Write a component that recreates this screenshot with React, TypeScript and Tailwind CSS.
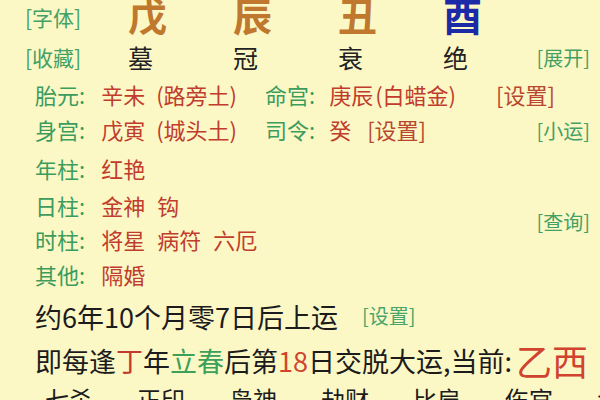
import React from 'react';

const green = 'text-[#3b9c5d]';
const red = 'text-[#c03c2d]';

const Label: React.FC<{ children: React.ReactNode }> = ({ children }) => (
  <span className={green}>{children}</span>
);

const Value: React.FC<{ children: React.ReactNode; className?: string }> = ({ children, className = '' }) => (
  <span className={`${red} ${className}`}>{children}</span>
);

const SideLink: React.FC<{ children: React.ReactNode; className?: string }> = ({ children, className = '' }) => (
  <span className={`text-[20px] leading-none text-[#45a065] ${className}`}>{children}</span>
);

const pillars = [
  { gan: '戊', state: '墓', color: 'text-[#c0782e]' },
  { gan: '辰', state: '冠', color: 'text-[#c0782e]' },
  { gan: '丑', state: '衰', color: 'text-[#c0782e]' },
  { gan: '酉', state: '绝', color: 'text-[#1c2aa8]' }
];

const gods = ['七杀', '正印', '枭神', '劫财', '比肩', '伤官', '食神'];

export default function App() {
  return (
    <div className="w-[600px] h-[400px] overflow-hidden bg-[#fcf8c6] font-['Noto_Sans_CJK_SC',sans-serif] leading-none">
      <div className="-mt-[7px]">
        {/* 四柱 */}
        <div className="flex h-[42px] items-center">
          <div className="w-[128px] pl-[25px] mt-[6px]">
            <SideLink className="text-[21px]">[字体]</SideLink>
          </div>
          {pillars.map((p, i) => (
            <div key={i} className={`w-[105px] text-[39px] font-bold ${p.color}`}>
              {p.gan}
            </div>
          ))}
        </div>

        <div className="flex h-[45px] items-center">
          <div className="w-[128px] pl-[25px]">
            <SideLink className="text-[21px]">[收藏]</SideLink>
          </div>
          {pillars.map((p, i) => (
            <div key={i} className={`${i === 3 ? 'w-[82px]' : 'w-[105px]'} text-[25px] text-[#222]`}>
              {p.state}
            </div>
          ))}
          <div className="flex-1 flex justify-end pr-[10px]">
            <SideLink>[展开]</SideLink>
          </div>
        </div>

        {/* 胎元 / 身宫 */}
        <div className="flex h-[28px] items-center pl-[35px] text-[22px] whitespace-nowrap">
          <Label>胎元:</Label>
          <Value className="ml-[16px]">辛未</Value>
          <Value className="ml-[11px]">(路旁土)</Value>
          <Label><span className="ml-[28px]">命宫:</span></Label>
          <Value className="ml-[14px]">庚辰</Value>
          <Value className="ml-[2px]">(白蜡金)</Value>
          <span className="ml-[40px] text-[#b9472f]">[设置]</span>
        </div>

        <div className="flex h-[42px] items-center pl-[35px] text-[22px] whitespace-nowrap">
          <Label>身宫:</Label>
          <Value className="ml-[16px]">戊寅</Value>
          <Value className="ml-[11px]">(城头土)</Value>
          <Label><span className="ml-[28px]">司令:</span></Label>
          <Value className="ml-[14px]">癸</Value>
          <span className="ml-[16px] text-[#b9472f]">[设置]</span>
          <div className="ml-auto pr-[10px]">
            <SideLink>[小运]</SideLink>
          </div>
        </div>

        {/* 神煞 */}
        <div className="flex h-[36px] items-center pl-[35px] text-[22px]">
          <Label>年柱:</Label>
          <Value className="ml-[16px]">红艳</Value>
        </div>

        <div className="flex">
          <div className="flex flex-col">
            <div className="flex h-[38px] items-center pl-[35px] text-[22px]">
              <Label>日柱:</Label>
              <Value className="ml-[16px]">金神</Value>
              <Value className="ml-[12px]">钩</Value>
            </div>
            <div className="flex h-[30px] items-center pl-[35px] text-[22px]">
              <Label>时柱:</Label>
              <Value className="ml-[16px]">将星</Value>
              <Value className="ml-[12px]">病符</Value>
              <Value className="ml-[12px]">六厄</Value>
            </div>
          </div>
          <div className="ml-auto pr-[10px] self-center mt-1">
            <SideLink>[查询]</SideLink>
          </div>
        </div>

        <div className="flex h-[40px] items-center pl-[35px] text-[22px]">
          <Label>其他:</Label>
          <Value className="ml-[16px]">隔婚</Value>
        </div>

        {/* 起运 */}
        <div className="flex h-[44px] items-center pl-[35px] text-[27px] text-[#1c1c1c] whitespace-nowrap">
          <span>约6年10个月零7日后上运</span>
          <span className="ml-[24px] text-[20px] text-[#4aa56a]">[设置]</span>
        </div>

        <div className="flex h-[44px] items-center pl-[35px] text-[27px] text-[#1c1c1c] whitespace-nowrap">
          <span>
            即每逢<span className="text-[#c23a2c]">丁</span>年
            <span className="text-[#3aa05a]">立春</span>后第
            <span className="text-[#d0442e]">18</span>日交脱大运,当前:
          </span>
          <span className="ml-[4px] text-[36px] text-[#d0432f]">乙西</span>
        </div>

        {/* 十神 */}
        <div className="flex h-[34px] items-center pl-[45px] text-[24px] text-[#1c1c1c] whitespace-nowrap">
          {gods.map((g) => (
            <div key={g} className="w-[92px] shrink-0">
              {g}
            </div>
          ))}
        </div>
      </div>
    </div>
  );
}
